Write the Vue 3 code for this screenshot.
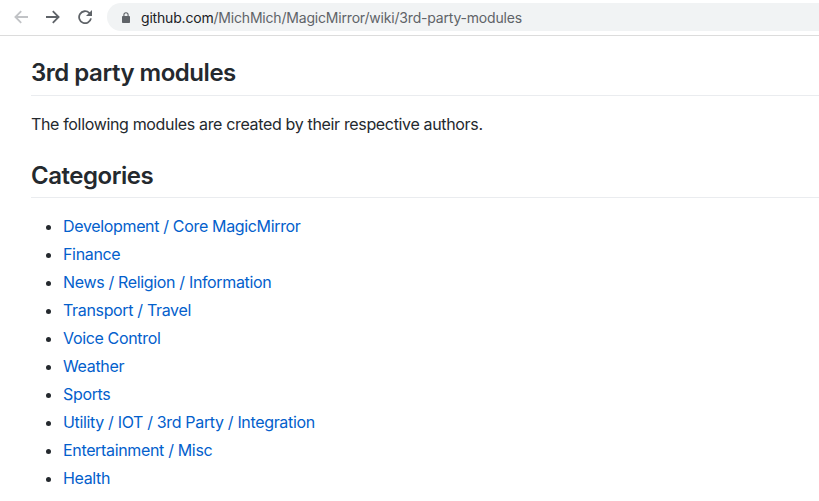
<template>
  <div class="page">
    <div class="toolbar">
      <div class="nav">
        <svg class="nav-icon" viewBox="0 0 14 14" fill="none" stroke="#c1c3c6" stroke-width="1.8">
          <path d="M14 7H1.6M7.2 1.2 1.4 7l5.8 5.8" />
        </svg>
        <svg class="nav-icon" viewBox="0 0 14 14" fill="none" stroke="#5f6368" stroke-width="1.8">
          <path d="M0 7H12.4M6.8 1.2 12.6 7l-5.8 5.8" />
        </svg>
        <svg class="nav-icon" viewBox="0 0 14 14" fill="none">
          <path d="M13 8.4A6 6 0 1 1 11.2 2.8L13 4.6" stroke="#5f6368" stroke-width="1.8" />
          <path d="M14 0V6H8Z" fill="#5f6368" />
        </svg>
      </div>
      <div class="omnibox">
        <svg class="lock" viewBox="0 0 8 11">
          <path d="M1.9 4.5V2.8a2.1 2.1 0 0 1 4.2 0V4.5" fill="none" stroke="#5f6368" stroke-width="1.1" />
          <rect x="0" y="4" width="8" height="7" rx=".8" fill="#5f6368" />
        </svg>
        <span class="url"><span class="host">github.com</span>/MichMich/MagicMirror/wiki/3rd-party-modules</span>
      </div>
    </div>
    <div class="content">
      <h1>3rd party modules</h1>
      <p>The following modules are created by their respective authors.</p>
      <h2>Categories</h2>
      <ul>
        <li v-for="item in categories" :key="item">
          <a href="#">{{ item }}</a>
        </li>
      </ul>
    </div>
  </div>
</template>

<script setup>
const categories = [
  'Development / Core MagicMirror',
  'Finance',
  'News / Religion / Information',
  'Transport / Travel',
  'Voice Control',
  'Weather',
  'Sports',
  'Utility / IOT / 3rd Party / Integration',
  'Entertainment / Misc',
  'Health'
]
</script>

<style>
html,
body {
  margin: 0;
  background: #fff;
  overflow: hidden;
}
</style>

<style scoped>
.page {
  width: 819px;
  height: 501px;
  overflow: hidden;
  font-family: Inter, "Liberation Sans", sans-serif;
  color: #24292e;
}

.toolbar {
  display: flex;
  align-items: center;
  height: 34px;
  padding-bottom: 1px;
  border-bottom: 1px solid #dcdcdc;
}

.nav {
  display: flex;
  align-items: center;
  gap: 18px;
  width: 107px;
  padding-left: 14px;
  box-sizing: border-box;
}

.nav-icon {
  width: 14px;
  height: 14px;
  flex: none;
}

.omnibox {
  flex: 1;
  display: flex;
  align-items: center;
  height: 28px;
  padding-left: 15px;
  background: #f1f3f4;
  border-radius: 14px 0 0 14px;
}

.lock {
  width: 8px;
  height: 11px;
  margin-right: 11px;
}

.url {
  font-size: 14px;
  letter-spacing: -0.19px;
  color: #5f6368;
  white-space: nowrap;
}

.host {
  color: #202124;
}

.content {
  padding: 0 0 0 31px;
}

h1,
h2 {
  margin: 0;
  font-size: 24px;
  line-height: 30px;
  font-weight: 600;
  letter-spacing: -0.48px;
  border-bottom: 1px solid #eaecef;
}

h1 {
  padding: 22px 0 7px;
}

h2 {
  padding: 1px 0 6px;
}

p {
  margin: 16px 0 24px;
  font-size: 16px;
  line-height: 24px;
  letter-spacing: -0.34px;
}

ul {
  margin: 16px 0 0;
  padding: 0 0 0 32px;
}

li {
  font-size: 16px;
  line-height: 24px;
  letter-spacing: -0.34px;
  margin-bottom: 4px;
}

a {
  color: #0360cc;
  text-decoration: none;
}
</style>
